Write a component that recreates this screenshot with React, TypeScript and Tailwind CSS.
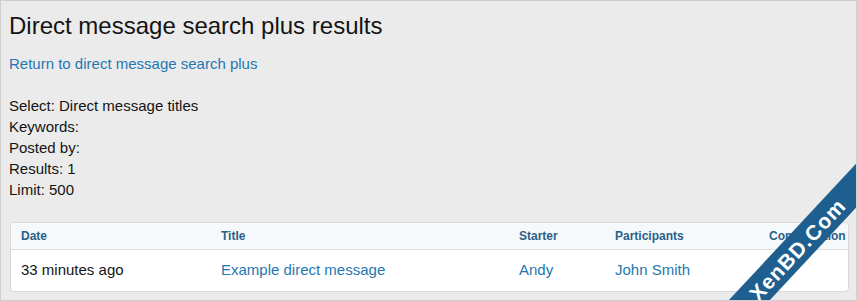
const font = { fontFamily: '"Liberation Sans", Arial, sans-serif' }

const cols = [
  { label: 'Date', w: 'w-[200px]' },
  { label: 'Title', w: 'w-[298px]' },
  { label: 'Starter', w: 'w-[96px]' },
  { label: 'Participants', w: 'w-[154px]' },
  { label: 'Conversation', w: 'flex-1' },
]

export default function App() {
  return (
    <div
      style={font}
      className="relative w-[857px] h-[301px] overflow-hidden bg-[#ebebeb] border border-[#cfcfcf] text-[#141414]"
    >
      <div className="pl-[8px] pr-[7px] pt-[10px]">
        <h1 className="text-[24px] leading-[30px]">Direct message search plus results</h1>
        <a className="block mt-[12px] text-[15px] leading-[21px] text-[#2577b1]">
          Return to direct message search plus
        </a>
        <div className="mt-[21px] text-[15px] leading-[21px]">
          <p>Select: Direct message titles</p>
          <p>Keywords:</p>
          <p>Posted by:</p>
          <p>Results: 1</p>
          <p>Limit: 500</p>
        </div>

        <div className="mt-[22px] ml-[1px] rounded-[4px] border border-[#d8d8d8] bg-white overflow-hidden">
          <div className="flex h-[27px] items-center bg-[#f5f9fc] border-b border-[#dfdfdf] text-[12px] font-bold text-[#2b5f88]">
            {cols.map((c) => (
              <div key={c.label} className={`${c.w} pl-[10px] whitespace-nowrap overflow-hidden`}>
                {c.label}
              </div>
            ))}
          </div>
          <div className="flex h-[41px] items-center text-[15px]">
            <div className="w-[200px] pl-[10px]">33 minutes ago</div>
            <div className="w-[298px] pl-[10px] text-[#2577b1]">Example direct message</div>
            <div className="w-[96px] pl-[10px] text-[#2577b1]">Andy</div>
            <div className="w-[154px] pl-[10px] text-[#2577b1]">John Smith</div>
            <div className="flex-1" />
          </div>
        </div>
      </div>

      {/* watermark ribbon */}
      <div className="absolute left-[646px] top-[233px] w-[300px] h-[30px] -rotate-[47deg] bg-[#1f5f8f] flex items-center justify-center">
        <span className="text-white text-[21px] font-bold tracking-[1px] leading-none">XenBD.Com</span>
      </div>
    </div>
  )
}
